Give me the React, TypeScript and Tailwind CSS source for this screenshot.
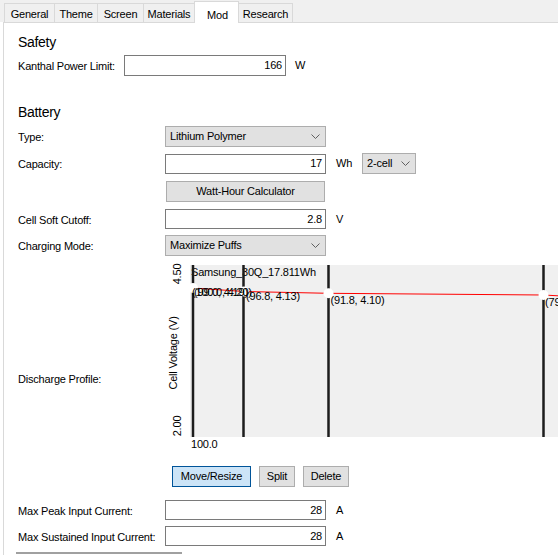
import React from 'react'

const tabs = [
    { name: 'General', w: 'w-[51px]' },
    { name: 'Theme', w: 'w-[44px]' },
    { name: 'Screen', w: 'w-[47px]' },
    { name: 'Materials', w: 'w-[52px]' },
    { name: 'Mod', w: 'w-[45px]', active: true },
    { name: 'Research', w: 'w-[55px]' },
]

function Chevron() {
    return (
        <svg width="9" height="5" viewBox="0 0 9 5" className="shrink-0">
            <polyline points="0.5,0.5 4.5,4.5 8.5,0.5" fill="none" stroke="#606060" strokeWidth="1" />
        </svg>
    )
}

function TextBox({ value, w = 'w-[161px]' }: { value: string; w?: string }) {
    return (
        <div className={`${w} h-[20px] border border-[#7a7a7a] bg-white flex items-center justify-end pr-[3px]`}>
            {value}
        </div>
    )
}

function Select({ value, w = 'w-[161px]' }: { value: string; w?: string }) {
    return (
        <div className={`${w} h-[21px] border border-[#adadad] bg-[#e1e1e1] flex items-center justify-between pl-[4px] pr-[5px]`}>
            <span>{value}</span>
            <Chevron />
        </div>
    )
}

function Row({ label, children, labelW = 'w-[147px]', className = '' }: { label: string; children: React.ReactNode; labelW?: string; className?: string }) {
    return (
        <div className={`flex items-center ${className}`}>
            <div className={`${labelW} shrink-0 pt-[2px]`}>{label}</div>
            {children}
        </div>
    )
}

function DischargeChart() {
    const xs = [33, 83.5, 168.5, 383.5]
    const pts = [
        [33, 26],
        [84, 29.5],
        [168.5, 31.3],
        [383.5, 33],
    ]
    return (
        <svg width="398" height="188" viewBox="0 0 398 188" className="block shrink-0" style={{ fontFamily: "'Liberation Sans', Arial, sans-serif" }}>
            <rect x="30" y="3" width="368" height="172" fill="#f0f0f0" />
            <text x="31" y="14" fontSize="11" fill="#000">Samsung_30Q_17.811Wh</text>
            {xs.map((x) => (
                <line key={x} x1={x} y1="3" x2={x} y2="175" stroke="#1c1c1c" strokeWidth="2.5" />
            ))}
            <polyline points="33,26 84,29.5 168.5,31.3 383.5,33 398,33.8" fill="none" stroke="#ff0000" strokeWidth="1" />
            {pts.map(([x, y]) => (
                <circle key={x} cx={x} cy={y} r="5" fill="#fff" />
            ))}
            <text x="32" y="34" fontSize="11" fill="#000">(100.0, 4.20)</text>
            <text x="34" y="34" fontSize="11" fill="#000">(99.0, 4.19)</text>
            <text x="86" y="38" fontSize="11" fill="#000">(96.8, 4.13)</text>
            <text x="170.5" y="42" fontSize="11" fill="#000">(91.8, 4.10)</text>
            <text x="385" y="44" fontSize="11" fill="#000">(79.6, 4.08)</text>
            <text transform="translate(21 12) rotate(-90)" textAnchor="middle" fontSize="11" fill="#000">4.50</text>
            <text transform="translate(17 91) rotate(-90)" textAnchor="middle" fontSize="11" fill="#000">Cell Voltage (V)</text>
            <text transform="translate(21 164) rotate(-90)" textAnchor="middle" fontSize="11" fill="#000">2.00</text>
            <text x="31" y="186" fontSize="11" fill="#000">100.0</text>
        </svg>
    )
}

export default function App() {
    return (
        <div className="w-[558px] h-[555px] overflow-hidden bg-white text-black text-[11px] leading-[13px] tracking-[-0.2px] font-['Liberation_Sans',Arial,sans-serif] flex flex-col">
            {/* tab strip */}
            <div className="h-[22px] shrink-0 bg-[#f0f0f0] flex items-end pl-[4px]">
                {tabs.map((t, i) =>
                    t.active ? (
                        <div
                            key={t.name}
                            className={`${t.w} h-[22px] -mb-px relative z-10 bg-white border border-b-0 border-[#d9d9d9] -ml-px flex justify-center pt-[7px] pl-[2px]`}
                        >
                            {t.name}
                        </div>
                    ) : (
                        <div
                            key={t.name}
                            className={`${t.w} h-[19px] border border-b-0 border-[#d9d9d9] ${i > 0 ? '-ml-px' : ''} flex items-center justify-center pt-[2px]`}
                        >
                            {t.name}
                        </div>
                    )
                )}
            </div>

            {/* panel */}
            <div className="flex-1 ml-[3px] border-l border-t border-[#d9d9d9] pl-[14px] flex flex-col">
                <div className="mt-[11px] h-[16px] text-[14px] leading-[16px] tracking-[-0.3px]">Safety</div>
                <Row label="Kanthal Power Limit:" labelW="w-[106px]" className="mt-[5px]">
                    <TextBox value="166" w="w-[162px] h-[21px]" />
                    <span className="ml-[9px]">W</span>
                </Row>

                <div className="mt-[28px] h-[16px] text-[14px] leading-[16px] tracking-[-0.3px]">Battery</div>
                <Row label="Type:" className="mt-[6px]">
                    <Select value="Lithium Polymer" />
                </Row>
                <Row label="Capacity:" className="mt-[6px]">
                    <TextBox value="17" />
                    <span className="ml-[10px]">Wh</span>
                    <div className="ml-[10px]">
                        <Select value="2-cell" w="w-[54px]" />
                    </div>
                </Row>
                <div className="mt-[7px] ml-[148px] w-[159px] h-[21px] border border-[#adadad] bg-[#e1e1e1] flex items-center justify-center">
                    Watt-Hour Calculator
                </div>
                <Row label="Cell Soft Cutoff:" className="mt-[7px]">
                    <TextBox value="2.8" />
                    <span className="ml-[10px]">V</span>
                </Row>
                <Row label="Charging Mode:" className="mt-[6px]">
                    <Select value="Maximize Puffs" />
                </Row>

                <div className="mt-[6px] flex items-start">
                    <div className="w-[142px] shrink-0 mt-[111px]">Discharge Profile:</div>
                    <DischargeChart />
                </div>

                <div className="mt-[16px] ml-[154px] flex gap-[8px]">
                    <div className="w-[79px] h-[21px] border border-[#005499] bg-[#cce4f7] flex items-center justify-center">
                        Move/Resize
                    </div>
                    <div className="w-[36px] h-[21px] border border-[#adadad] bg-[#e1e1e1] flex items-center justify-center">
                        Split
                    </div>
                    <div className="w-[46px] h-[21px] border border-[#adadad] bg-[#e1e1e1] flex items-center justify-center">
                        Delete
                    </div>
                </div>

                <Row label="Max Peak Input Current:" className="mt-[13px]">
                    <TextBox value="28" />
                    <span className="ml-[10px]">A</span>
                </Row>
                <Row label="Max Sustained Input Current:" className="mt-[6px]">
                    <TextBox value="28" />
                    <span className="ml-[10px]">A</span>
                </Row>
                <div className="mt-[6px] -ml-[2px] w-[166px] h-[2px] bg-[#a0a0a0]" />
            </div>
        </div>
    )
}
